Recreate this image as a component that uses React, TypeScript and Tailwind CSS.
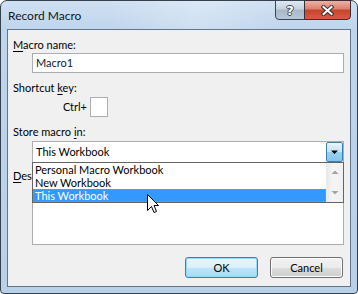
import React from 'react';

const Acc: React.FC<{ children: React.ReactNode }> = ({ children }) => (
  <span className="underline underline-offset-[2px] decoration-1">{children}</span>
);

const App: React.FC = () => {
  return (
    <div className="w-[358px] h-[294px] font-['Lato',sans-serif] text-[11px] leading-[16px] text-black">
      <div className="relative w-[358px] h-[294px] rounded-t-[7px] rounded-b-[4px] border border-[#36414e] bg-[linear-gradient(180deg,#cfe0f2_0px,#bfd5ec_28px,#b9d0e9_100%)] flex flex-col">
        {/* Title bar */}
        <div className="h-[28px] pt-[7px] pl-[7px] text-[12px] text-[#101820] bg-[linear-gradient(90deg,rgba(255,255,255,0)_30%,rgba(255,255,255,0.25)_55%,rgba(255,255,255,0)_80%)]">
          Record Macro
        </div>

        {/* Caption buttons */}
        <div className="absolute top-[-1px] left-[274px] w-[30px] h-[20px] border border-[#3a4656] rounded-bl-[4px] bg-[linear-gradient(180deg,#dfe8f2_0%,#c5d2e0_45%,#a9b8c9_50%,#b9c8d8_100%)] flex items-center justify-center">
          <span className="font-['DejaVu_Sans',sans-serif] font-bold text-[13px] leading-[13px] text-white [text-shadow:-1px_0_#3a4656,1px_0_#3a4656,0_-1px_#3a4656,0_1px_#3a4656]">
            ?
          </span>
        </div>
        <div className="absolute top-[-1px] left-[303px] w-[47px] h-[20px] border border-[#3a2f33] rounded-br-[4px] bg-[linear-gradient(180deg,#eab3a6_0%,#dc7f6b_45%,#c7442b_50%,#d65c43_100%)] flex items-center justify-center">
          <svg width="13" height="11" viewBox="0 0 13 11">
            <path d="M2.5 2 L10.5 9 M10.5 2 L2.5 9" stroke="#40302e" strokeWidth="4" strokeLinecap="square" />
            <path d="M2.5 2 L10.5 9 M10.5 2 L2.5 9" stroke="#ffffff" strokeWidth="2" strokeLinecap="square" />
          </svg>
        </div>

        {/* Client area */}
        <div className="relative mx-[6px] h-[258px] border border-[#62758c] bg-[#f0f0f0] flex flex-col">
          <div className="mt-[7px] pl-[5px]">
            <Acc>M</Acc>acro name:
          </div>
          <div className="ml-[24px] mr-[6px] h-[20px] border border-[#abadb3] bg-white pl-[3px] flex items-center text-[#0a1a30]">
            Macro1
          </div>

          <div className="mt-[7px] pl-[5px]">
            Shortcut <Acc>k</Acc>ey:
          </div>
          <div className="mt-[1px] flex items-center">
            <span className="w-[82px] text-right pr-[3px]">Ctrl+</span>
            <div className="w-[18px] h-[20px] border border-[#abadb3] bg-white" />
          </div>

          <div className="mt-[7px] pl-[5px]">
            Store macro <Acc>i</Acc>n:
          </div>
          <div className="mt-[1px] ml-[24px] mr-[6px] h-[22px] border border-[#abadb3] bg-white flex items-center">
            <span className="flex-1 pl-[3px]">This Workbook</span>
            <div className="w-[17px] h-[20px] border border-[#3c7fb1] rounded-[2px] bg-[linear-gradient(180deg,#e8f5fc_0%,#c4e5f7_50%,#98d1ef_51%,#8ac5e8_100%)] flex items-center justify-center">
              <svg width="9" height="6" viewBox="0 0 9 6">
                <path d="M1 1.5 H8 L4.5 5 Z" fill="#000" />
              </svg>
            </div>
          </div>

          <div className="mt-[5px] ml-[5px] w-[19px] overflow-hidden whitespace-nowrap">
            <Acc>D</Acc>escription:
          </div>
          <div className="mt-[2px] ml-[24px] mr-[6px] h-[59px] border border-[#abadb3] bg-white" />

          <div className="mt-[12px] pr-[7px] flex justify-end gap-[12px]">
            <button className="w-[73px] h-[21px] rounded-[3px] border border-[#3c7fb1] bg-[linear-gradient(180deg,#eaf6fd_0%,#d9f0fc_50%,#bee6fd_51%,#a7d9f5_100%)] shadow-[inset_0_0_0_1px_#96d9f9] flex items-center justify-center">
              OK
            </button>
            <button className="w-[73px] h-[21px] rounded-[3px] border border-[#707070] bg-[linear-gradient(180deg,#f2f2f2_0%,#ebebeb_50%,#dddddd_51%,#cfcfcf_100%)] shadow-[inset_0_0_0_1px_#fcfcfc] flex items-center justify-center">
              Cancel
            </button>
          </div>

          {/* Dropdown list */}
          <div className="absolute left-[24px] top-[132px] w-[312px] h-[41px] border border-[#646464] bg-white flex leading-[13px]">
            <div className="flex-1 flex flex-col">
              <div className="h-[13px] pl-[2px]">Personal Macro Workbook</div>
              <div className="h-[13px] pl-[2px]">New Workbook</div>
              <div className="h-[13px] pl-[2px] bg-[#3399ff] text-white outline outline-1 outline-dotted outline-[#d88a3a] -outline-offset-1">
                This Workbook
              </div>
            </div>
            <div className="w-[17px] bg-[linear-gradient(90deg,#e8e8e8_0%,#f5f5f5_40%,#f0f0f0_100%)] flex flex-col items-center justify-between py-[7px]">
              <svg width="8" height="5" viewBox="0 0 8 5">
                <path d="M4 0.5 L7.5 4 H0.5 Z" fill="#a3a3a3" />
              </svg>
              <svg width="8" height="5" viewBox="0 0 8 5">
                <path d="M0.5 1 H7.5 L4 4.5 Z" fill="#a3a3a3" />
              </svg>
            </div>
          </div>
        </div>

        {/* Mouse pointer */}
        <svg className="absolute left-[146px] top-[193px]" width="13" height="20" viewBox="0 0 13 20">
          <path d="M0.5 0.5 V16.5 L4.5 12.5 L7 18.5 L9.5 17.5 L7 11.5 H11.5 Z" fill="#ffffff" stroke="#000000" strokeWidth="1" strokeLinejoin="miter" />
        </svg>
      </div>
    </div>
  );
};

export default App;
